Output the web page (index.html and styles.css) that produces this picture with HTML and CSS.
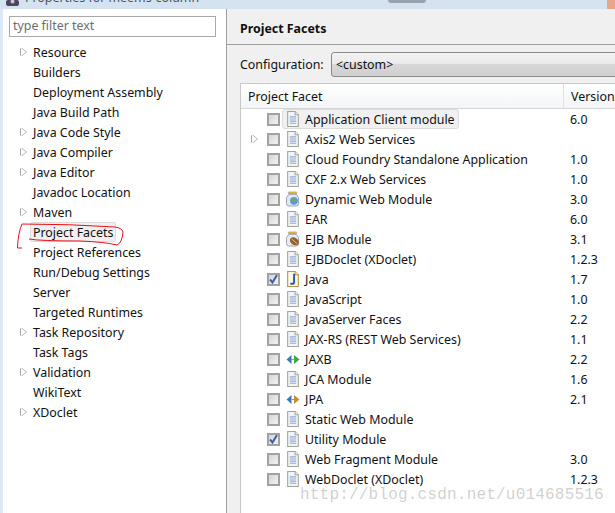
FILE: index.html
```html
<!DOCTYPE html>
<html lang="en">
<head>
    <meta charset="UTF-8">
    <title>Properties for meems-column</title>
    <link rel="stylesheet" href="styles.css">
</head>
<body>
    <svg class="sprites" width="0" height="0">
        <symbol id="i-doc" viewBox="0 0 13 15">
            <path d="M1.500 .5H8.500L11.500 3.500V14.500H1.500Z" fill="#f1f5fb" stroke="#a3a594"/>
            <path d="M8.500 .5V3.500H11.500" fill="#fff" stroke="#a3a594"/>
            <path d="M3.500 5.500H9.500M3.500 7.500H9.500M3.500 9.500H9.500M3.500 11.500H9.500" stroke="#8fa9cf"/>
        </symbol>
        <symbol id="i-java" viewBox="0 0 13 15">
            <path d="M1.500 .5H8.500L11.500 3.500V14.500H1.500Z" fill="#fbf6e6" stroke="#b4954a"/>
            <path d="M8.500 .5V3.500H11.500" fill="#fff" stroke="#b4954a"/>
            <path d="M7.500 2.500V10.500Q7.500 12 6 12H4" fill="none" stroke="#2a5bb0" stroke-width="1.800"/>
        </symbol>
        <symbol id="i-web" viewBox="0 0 15 16">
            <rect x="3" y=".5" width="8" height="2" fill="#e8c55a" stroke="#b2892a" stroke-width=".7"/>
            <path d="M3 3H11L13.500 6.500V13Q13.500 15.500 11 15.500H3Q.5 15.500 .5 13V6.500Z" fill="#dfe9f2" stroke="#8f9fb0"/>
            <circle cx="8.500" cy="10" r="4.200" fill="#5d9ad0"/>
            <path d="M6 8Q8 6.500 9.500 8T8 11Q6 11 6 8Z" fill="#6fae57"/>
        </symbol>
        <symbol id="i-bean" viewBox="0 0 15 16">
            <rect x="3" y=".5" width="8" height="2" fill="#e8c55a" stroke="#b2892a" stroke-width=".7"/>
            <path d="M3 3H11L13.500 6.500V13Q13.500 15.500 11 15.500H3Q.5 15.500 .5 13V6.500Z" fill="#e6edf3" stroke="#8f9fb0"/>
            <ellipse cx="9" cy="10.500" rx="5.200" ry="3.800" fill="#99602c" transform="rotate(35 9 10.500)"/>
            <path d="M6 8L12 13" stroke="#e3c298"/>
        </symbol>
        <symbol id="i-xml-green" viewBox="0 0 14 11">
            <path d="M5.500 1V10L.5 5.500Z" fill="#3f78b5"/>
            <path d="M8 1V10L13.500 5.500Z" fill="#3aa845"/>
            <path d="M5 5.500H9" stroke="#7f9f8a"/>
        </symbol>
        <symbol id="i-xml-orange" viewBox="0 0 14 11">
            <path d="M5.500 1V10L.5 5.500Z" fill="#3f78b5"/>
            <path d="M8 1V10L13.500 5.500Z" fill="#d0892c"/>
            <path d="M5 5.500H9" stroke="#9f9a80"/>
        </symbol>
        <symbol id="i-tick" viewBox="0 0 9 9">
            <path d="M1 4.500L3.500 7.500L8 0" fill="none" stroke="#3d5fa8" stroke-width="2"/>
        </symbol>
    </svg>

    <div class="titlebar">
        <svg class="title-icon" width="15" height="9" viewBox="0 0 15 9">
            <rect x="1" y="0" width="13" height="6" rx="2" fill="#4d4560"/>
            <circle cx="7.500" cy="1.500" r="2" fill="#c9c4d6"/>
        </svg>
        <span class="title-text">Properties for meems-column</span>
        <span class="title-blur"></span>
        <span class="title-close"></span>
    </div>

    <div class="window">
        <div class="nav">
            <div class="filter">type filter text</div>
            <ul class="tree">
                <li class="node has-kids"><span>Resource</span></li>
                <li class="node"><span>Builders</span></li>
                <li class="node"><span>Deployment Assembly</span></li>
                <li class="node"><span>Java Build Path</span></li>
                <li class="node has-kids"><span>Java Code Style</span></li>
                <li class="node has-kids"><span>Java Compiler</span></li>
                <li class="node has-kids"><span>Java Editor</span></li>
                <li class="node"><span>Javadoc Location</span></li>
                <li class="node has-kids"><span>Maven</span></li>
                <li class="node selected"><span>Project Facets</span></li>
                <li class="node"><span>Project References</span></li>
                <li class="node"><span>Run/Debug Settings</span></li>
                <li class="node"><span>Server</span></li>
                <li class="node"><span>Targeted Runtimes</span></li>
                <li class="node has-kids"><span>Task Repository</span></li>
                <li class="node"><span>Task Tags</span></li>
                <li class="node has-kids"><span>Validation</span></li>
                <li class="node"><span>WikiText</span></li>
                <li class="node has-kids"><span>XDoclet</span></li>
            </ul>
        </div>

        <div class="page">
            <h1 class="page-title">Project Facets</h1>
            <div class="config">
                <label class="config-label">Configuration:</label>
                <div class="combo">&lt;custom&gt;</div>
            </div>
            <div class="facets">
                <div class="facets-head">
                    <div class="col-name">Project Facet</div>
                    <div class="col-version">Version</div>
                </div>
                <div class="row">
                    <span class="check"></span>
                    <span class="facet selected"><svg class="icon"><use href="#i-doc"/></svg>Application Client module</span>
                    <span class="version">6.0</span>
                </div>
                <div class="row">
                    <span class="twisty"></span><span class="check"></span>
                    <span class="facet"><svg class="icon"><use href="#i-doc"/></svg>Axis2 Web Services</span>
                    <span class="version"></span>
                </div>
                <div class="row">
                    <span class="check"></span>
                    <span class="facet"><svg class="icon"><use href="#i-doc"/></svg>Cloud Foundry Standalone Application</span>
                    <span class="version">1.0</span>
                </div>
                <div class="row">
                    <span class="check"></span>
                    <span class="facet"><svg class="icon"><use href="#i-doc"/></svg>CXF 2.x Web Services</span>
                    <span class="version">1.0</span>
                </div>
                <div class="row">
                    <span class="check"></span>
                    <span class="facet"><svg class="icon"><use href="#i-web"/></svg>Dynamic Web Module</span>
                    <span class="version">3.0</span>
                </div>
                <div class="row">
                    <span class="check"></span>
                    <span class="facet"><svg class="icon"><use href="#i-doc"/></svg>EAR</span>
                    <span class="version">6.0</span>
                </div>
                <div class="row">
                    <span class="check"></span>
                    <span class="facet"><svg class="icon"><use href="#i-bean"/></svg>EJB Module</span>
                    <span class="version">3.1</span>
                </div>
                <div class="row">
                    <span class="check"></span>
                    <span class="facet"><svg class="icon"><use href="#i-doc"/></svg>EJBDoclet (XDoclet)</span>
                    <span class="version">1.2.3</span>
                </div>
                <div class="row">
                    <span class="check"><svg class="tick"><use href="#i-tick"/></svg></span>
                    <span class="facet"><svg class="icon"><use href="#i-java"/></svg>Java</span>
                    <span class="version">1.7</span>
                </div>
                <div class="row">
                    <span class="check"></span>
                    <span class="facet"><svg class="icon"><use href="#i-doc"/></svg>JavaScript</span>
                    <span class="version">1.0</span>
                </div>
                <div class="row">
                    <span class="check"></span>
                    <span class="facet"><svg class="icon"><use href="#i-doc"/></svg>JavaServer Faces</span>
                    <span class="version">2.2</span>
                </div>
                <div class="row">
                    <span class="check"></span>
                    <span class="facet"><svg class="icon"><use href="#i-doc"/></svg>JAX-RS (REST Web Services)</span>
                    <span class="version">1.1</span>
                </div>
                <div class="row">
                    <span class="check"></span>
                    <span class="facet"><svg class="icon small"><use href="#i-xml-green"/></svg>JAXB</span>
                    <span class="version">2.2</span>
                </div>
                <div class="row">
                    <span class="check"></span>
                    <span class="facet"><svg class="icon"><use href="#i-doc"/></svg>JCA Module</span>
                    <span class="version">1.6</span>
                </div>
                <div class="row">
                    <span class="check"></span>
                    <span class="facet"><svg class="icon small"><use href="#i-xml-orange"/></svg>JPA</span>
                    <span class="version">2.1</span>
                </div>
                <div class="row">
                    <span class="check"></span>
                    <span class="facet"><svg class="icon"><use href="#i-doc"/></svg>Static Web Module</span>
                    <span class="version"></span>
                </div>
                <div class="row">
                    <span class="check"><svg class="tick"><use href="#i-tick"/></svg></span>
                    <span class="facet"><svg class="icon"><use href="#i-doc"/></svg>Utility Module</span>
                    <span class="version"></span>
                </div>
                <div class="row">
                    <span class="check"></span>
                    <span class="facet"><svg class="icon"><use href="#i-doc"/></svg>Web Fragment Module</span>
                    <span class="version">3.0</span>
                </div>
                <div class="row">
                    <span class="check"></span>
                    <span class="facet"><svg class="icon"><use href="#i-doc"/></svg>WebDoclet (XDoclet)</span>
                    <span class="version">1.2.3</span>
                </div>
            </div>
        </div>
    </div>

    <!-- hand drawn circle around the menu item -->
    <svg class="scribble" width="130" height="40" viewBox="0 0 130 40">
        <path d="M115 6Q70 3 22 3Q18 12 17.500 27H22M29 18Q40 20 80 20Q105 21 117 24Q122 22 123 11Q122 7 115 6" fill="none" stroke="#e8101c" stroke-width="1"/>
    </svg>

    <div class="watermark">http://blog.csdn.net/u014685516</div>
</body>
</html>
```

FILE: styles.css
```css
html, body {
    margin: 0;
    height: 513px;
    overflow: hidden;
}
body {
    position: relative;
    width: 615px;
    background-color: #f0f0f0;
    font-family: "Noto Sans", sans-serif;
    font-size: 12.4px;
    color: #111;
}
.sprites {
    display: block;
    height: 0;
}

.titlebar {
    display: flex;
    height: 9px;
    overflow: hidden;
    background-color: #d5e3f1;
    color: #4a5360;
    padding-left: 5px;
}
.title-icon {
    flex: none;
}
.title-text {
    margin-left: 5px;
    line-height: 16px;
    margin-top: -10px;
    white-space: nowrap;
}
.title-blur {
    width: 38px;
    height: 3px;
    margin-left: 189px;
    background-color: #9aa2ab;
    border-radius: 0 0 20px 20px;
}
.title-close {
    width: 8px;
    height: 9px;
    margin-left: auto;
    background-color: #e8a888;
}

.window {
    display: flex;
    height: 504px;
    border-left: 3px solid #dbe8f5;
}

.nav {
    width: 223px;
    flex: none;
    background-color: #fff;
    border-right: 1px solid #a0a0a0;
    padding-top: 7px;
}
.filter {
    box-sizing: border-box;
    width: 207px;
    height: 21px;
    margin-left: 6px;
    border: 1px solid #a9a9a9;
    padding-left: 3px;
    line-height: 18px;
    color: #6d6d6d;
}
.tree {
    list-style: none;
    margin: 5px 0 0;
    padding: 0;
}
.node {
    position: relative;
    height: 20px;
    line-height: 21px;
    padding-left: 27px;
    white-space: nowrap;
}
.node span {
    display: inline-block;
    height: 20px;
    padding: 0 3px;
}
.node.selected span {
    box-sizing: border-box;
    line-height: 19px;
    border: 1px solid #dcdcdc;
    border-radius: 2px;
    padding: 0 2px;
    background-color: #f0f0f0;
}
.has-kids::before {
    content: "";
    position: absolute;
    left: 18px;
    top: 6px;
    border-left: 5px solid #fff;
    border-top: 4px solid transparent;
    border-bottom: 4px solid transparent;
    filter: drop-shadow(1px 0 0 #a6a6a6) drop-shadow(-1px 0 0 #a6a6a6);
}

.page {
    flex: 1;
    min-width: 0;
    overflow: hidden;
}
.page-title {
    margin: 0;
    height: 35px;
    padding-left: 13px;
    font-size: 12.4px;
    font-weight: bold;
    line-height: 39px;
    border-bottom: 1px solid #a0a0a0;
}
.config {
    display: flex;
    align-items: center;
    margin-top: 7px;
    padding-left: 13px;
    line-height: 23px;
}
.config-label {
    width: 91px;
    flex: none;
}
.combo {
    box-sizing: border-box;
    flex: none;
    width: 300px;
    height: 25px;
    border: 1px solid #8a8a8a;
    border-radius: 3px;
    padding-left: 4px;
    line-height: 23px;
    background: linear-gradient(#f2f2f2 0%, #ebebeb 45%, #d8d8d8 50%, #cfcfcf 100%);
}
.facets {
    box-sizing: border-box;
    width: 420px;
    height: 440px;
    margin: 6px 0 0 13px;
    background-color: #fff;
    border: 1px solid #c8c8c8;
}
.facets-head {
    display: flex;
    height: 24px;
    line-height: 25px;
    border-bottom: 1px solid #d5d5d5;
    background: linear-gradient(#fff, #f3f5f7);
}
.col-name {
    width: 323px;
    flex: none;
    padding-left: 7px;
    box-sizing: border-box;
    border-right: 1px solid #e0e0e0;
}
.col-version {
    padding-left: 7px;
}
.row {
    position: relative;
    display: flex;
    align-items: center;
    height: 20px;
    padding-left: 26px;
    white-space: nowrap;
}
.twisty {
    position: absolute;
    left: 11px;
    top: 6px;
    border-left: 5px solid #fff;
    border-top: 4px solid transparent;
    border-bottom: 4px solid transparent;
    filter: drop-shadow(1px 0 0 #a6a6a6) drop-shadow(-1px 0 0 #a6a6a6);
}
.check {
    box-sizing: border-box;
    display: block;
    flex: none;
    width: 13px;
    height: 13px;
    border: 2px solid #a2a2a2;
    background: linear-gradient(135deg, #d6d6d6, #f2f2f2);
}
.tick {
    display: block;
    width: 9px;
    height: 9px;
}
.facet {
    box-sizing: border-box;
    display: flex;
    align-items: center;
    width: 297px;
    height: 20px;
    padding-left: 4px;
    margin-left: 2px;
}
.facet.selected {
    width: auto;
    margin-right: auto;
    border: 1px solid #dcdcdc;
    border-radius: 3px;
    background-color: #f0f0f0;
    padding-left: 3px;
    padding-right: 3px;
}
.icon {
    flex: none;
    width: 14px;
    height: 16px;
    margin-right: 5px;
}
.icon.small {
    height: 11px;
}
.version {
    position: absolute;
    left: 329px;
}

.scribble {
    position: absolute;
    left: 0;
    top: 221px;
}
.watermark {
    position: absolute;
    left: 300px;
    top: 489px;
    font-family: "Liberation Mono", monospace;
    font-size: 16px;
    line-height: 12px;
    letter-spacing: .2px;
    color: rgba(150, 150, 150, .45);
    white-space: nowrap;
}
```
